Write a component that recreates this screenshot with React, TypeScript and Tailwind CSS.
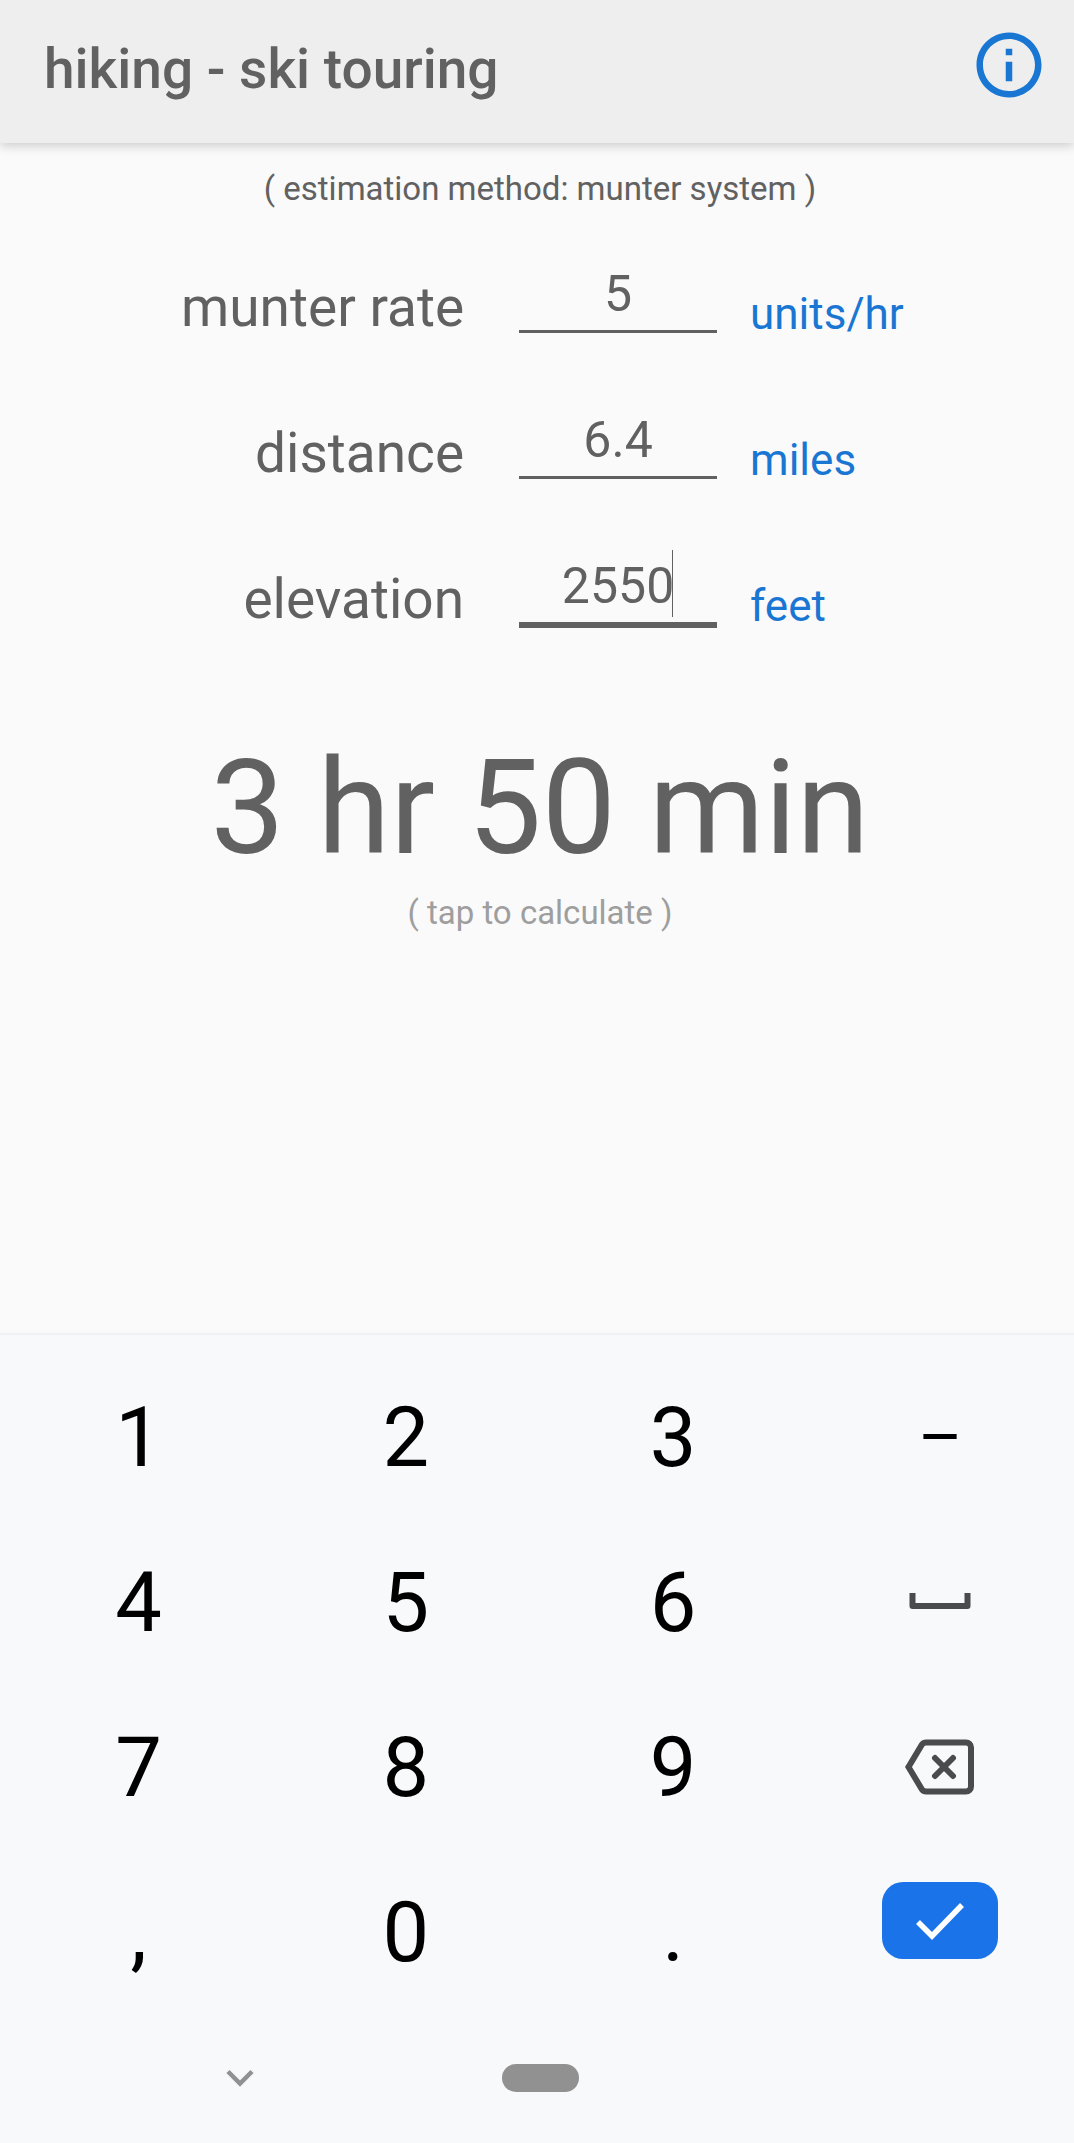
import { useState } from 'react'
import { MdInfoOutline } from 'react-icons/md'

const fields = [
  { id: 'rate', label: 'munter rate', unit: 'units/hr' },
  { id: 'distance', label: 'distance', unit: 'miles' },
  { id: 'elevation', label: 'elevation', unit: 'feet' },
]

const keys = ['1', '2', '3', '–', '4', '5', '6', 'space', '7', '8', '9', 'delete', ',', '0', '.', 'done']

function SpaceIcon() {
  return (
    <svg width="62" height="20" viewBox="0 0 62 20" fill="none" aria-hidden="true">
      <path d="M3.5 1v13h55V1" stroke="#4a4b4d" strokeWidth="6" strokeLinejoin="round" />
    </svg>
  )
}

function DeleteIcon() {
  return (
    <svg width="70" height="56" viewBox="0 0 70 56" fill="none" stroke="#4a4b4d" strokeWidth="6" aria-hidden="true">
      <path d="M21 3.5h40a5 5 0 0 1 5 5v39a5 5 0 0 1-5 5H21a5 5 0 0 1-4-2L3.500 28 17 5.500a5 5 0 0 1 4-2z" />
      <path d="M30 19l18 18M48 19L30 37" strokeLinecap="round" />
    </svg>
  )
}

function CheckIcon() {
  return (
    <svg width="50" height="40" viewBox="0 0 50 40" fill="none" aria-hidden="true">
      <path d="M3 21l14 14L47 4" stroke="#fff" strokeWidth="5.500" />
    </svg>
  )
}

export default function App() {
  const [values, setValues] = useState<Record<string, string>>({ rate: '5', distance: '6.4', elevation: '2550' })
  const [active, setActive] = useState('elevation')

  const update = (id: string, value: string) => setValues({ ...values, [id]: value })

  const press = (key: string) => {
    if (key === 'done') return
    if (key === 'delete') update(active, values[active].slice(0, -1))
    else update(active, values[active] + (key === 'space' ? ' ' : key))
  }

  return (
    <div className="flex min-h-screen flex-col bg-[#fafafa] font-[Roboto,sans-serif] text-[#616161]">
      <header className="flex items-start justify-between bg-[#eeeeee] pt-[26px] pr-[26px] pb-[35px] pl-11 shadow-[0_3px_10px_rgba(0,0,0,0.18)]">
        <h1 className="mt-1 text-[55px] leading-[78px] font-medium">hiking - ski touring</h1>
        <button type="button" aria-label="Info" className="text-[#1976d2]">
          <MdInfoOutline size={78} />
        </button>
      </header>

      <main className="flex-1 pt-[26px] pl-1.5">
        <p className="text-center text-[33px] leading-[40px]">( estimation method: munter system )</p>

        <form className="mt-[53px] flex flex-col gap-[42px]">
          {fields.map((field) => (
            <div key={field.id} className="grid grid-cols-[23fr_198px_16fr] items-start">
              <label htmlFor={field.id} className="pr-[55px] text-right text-[55px] leading-[90px]">
                {field.label}
              </label>
              <div className="relative">
                <input
                  id={field.id}
                  value={values[field.id]}
                  inputMode="none"
                  onFocus={() => setActive(field.id)}
                  onChange={(e) => update(field.id, e.target.value)}
                  className={`box-content block h-16 w-full border-[#616161] pb-1 text-center text-[50px] caret-transparent outline-none ${
                    active === field.id ? 'border-b-[6px]' : 'border-b-[3px]'
                  }`}
                />
                {active === field.id && (
                  <span
                    className="absolute -top-1 h-[67px] w-px bg-[#616161]"
                    style={{ left: `calc(50% + ${values[field.id].length * 14 - 2}px)` }}
                  />
                )}
              </div>
              <button type="button" className="pl-[33px] text-left text-[44px] leading-[104px] text-[#1976d2]">
                {field.unit}
              </button>
            </div>
          ))}
        </form>

        <button type="button" className="mt-[77px] block w-full text-center">
          <span className="block text-[132px] leading-[146px]">3 hr 50 min</span>
          <span className="mt-3 block text-[33px] leading-[40px] text-[#9e9e9e]">( tap to calculate )</span>
        </button>
      </main>

      <div className="border-t-2 border-[#f0f1f3] bg-[#f8f9fb] text-black">
        <div className="grid auto-rows-[165px] grid-cols-4 pt-[19px] pl-[5px]">
          {keys.map((key) => (
            <button
              key={key}
              type="button"
              aria-label={key}
              onClick={() => press(key)}
              className="flex items-center justify-center"
            >
              {key === 'space' && <SpaceIcon />}
              {key === 'delete' && <DeleteIcon />}
              {key === 'done' && (
                <span className="mb-[22px] flex h-[77px] w-[116px] items-center justify-center rounded-[21px] bg-[#1a73e8]">
                  <CheckIcon />
                </span>
              )}
              {key.length === 1 && (
                <span className={`pt-0.5 leading-[112px] ${key === '–' ? 'text-[68px]' : 'text-[83px]'}`}>{key}</span>
              )}
            </button>
          ))}
        </div>

        {/* System navigation */}
        <nav className="grid h-[129px] grid-cols-[468px_1fr_468px] items-center pb-0.5 pl-1.5">
          <button type="button" aria-label="Hide keyboard" className="flex justify-center">
            <svg width="28" height="18" viewBox="0 0 28 18" fill="none" aria-hidden="true">
              <path d="M2 2.500l12 12 12-12" stroke="#919191" strokeWidth="4.500" />
            </svg>
          </button>
          <button type="button" aria-label="Home" className="mx-auto h-7 w-[77px] rounded-full bg-[#919191]" />
        </nav>
      </div>
    </div>
  )
}
